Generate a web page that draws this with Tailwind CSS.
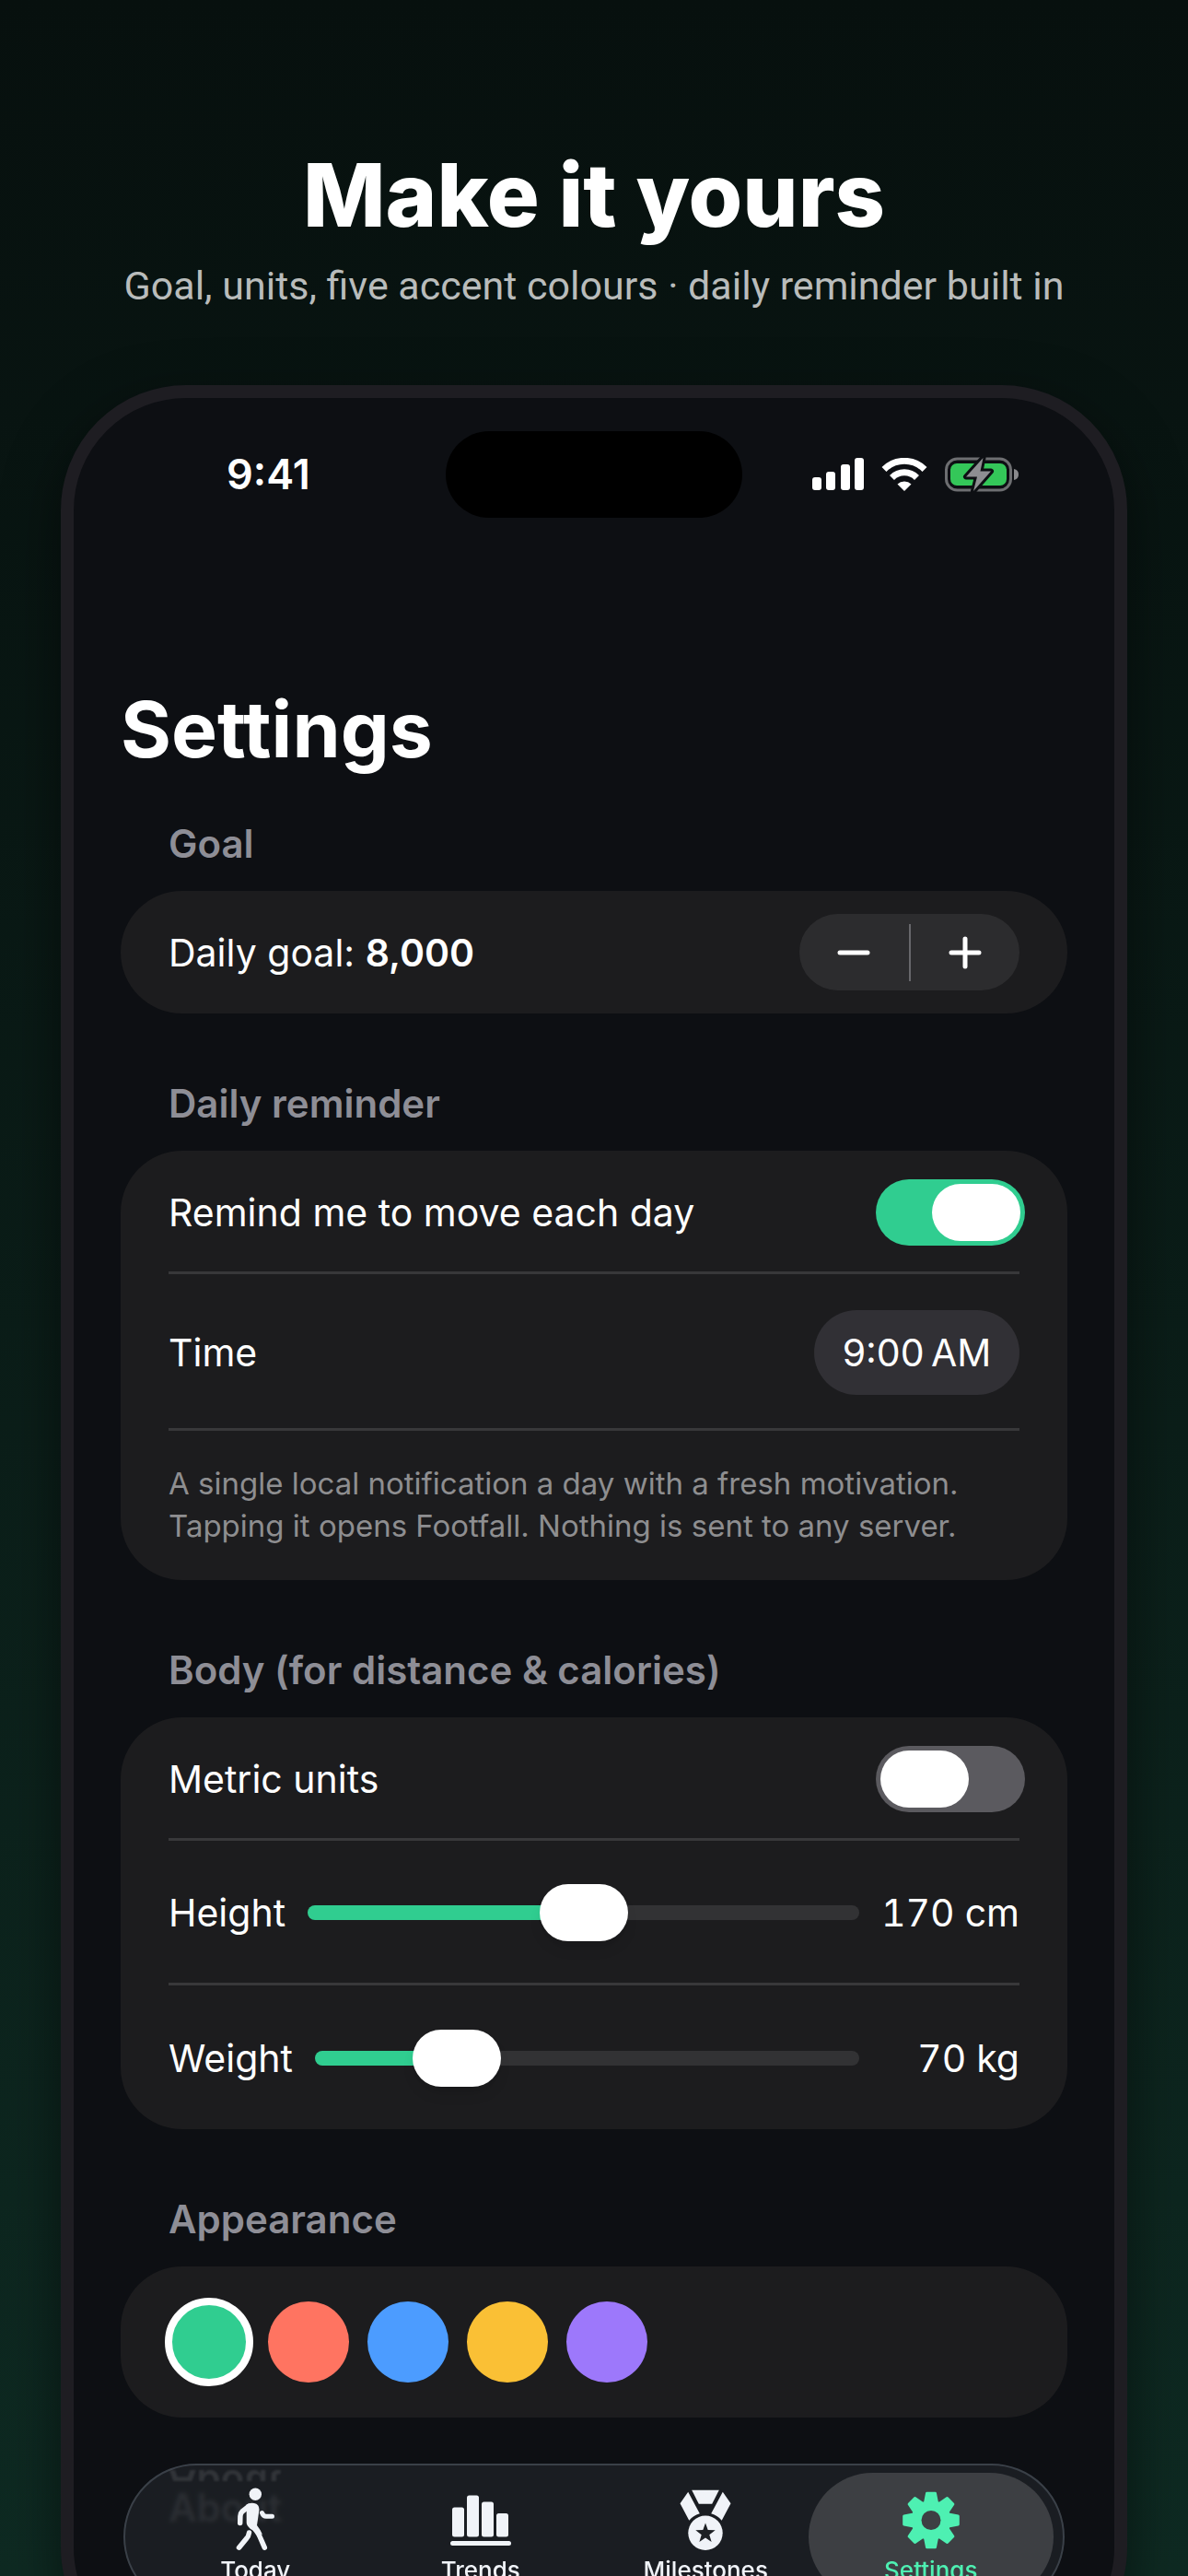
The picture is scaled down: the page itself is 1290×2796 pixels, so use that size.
<!DOCTYPE html>
<html lang="en">
  <head>
    <meta charset="UTF-8" />
    <meta name="viewport" content="width=device-width, initial-scale=1.0" />
    <title>Footfall - Make it yours</title>
    <script src="https://cdn.jsdelivr.net/npm/@tailwindcss/browser@4"></script>
  </head>

  <body class="h-screen overflow-hidden bg-linear-to-b from-[#07100e] to-[#0e2a22] font-[Inter,sans-serif] text-white antialiased">
    <!-- Headline -->
    <header class="pt-[152px] text-center">
      <h1 class="text-[95px] leading-[120px] font-extrabold">Make it yours</h1>
      <p class="mt-3 font-[Roboto,sans-serif] text-[43px] leading-[52px] text-[#b9bcbb]">Goal, units, five accent colours · daily reminder built in</p>
    </header>

    <!-- Phone -->
    <main class="relative mx-[66px] mt-[82px] h-[2483px] overflow-hidden rounded-[136px] border-14 border-[#1e1d22] bg-[#0d0f13] shadow-[0_20px_60px_rgba(0,0,0,0.5)]">
      <!-- Status bar -->
      <div class="grid grid-cols-3 items-center pt-9">
        <span class="pl-[166px] text-[45px] leading-[52px] font-semibold">9:41</span>
        <div class="mx-auto h-[94px] w-[322px] rounded-[47px] bg-black"></div>
        <div class="flex items-center justify-end gap-[19px] pr-[104px]">
          <svg class="h-9 w-14" viewBox="0 0 56 36" fill="#fff">
            <rect x="0" y="21" width="10" height="14" rx="3" />
            <rect x="15" y="15" width="10" height="20" rx="3" />
            <rect x="31" y="7" width="10" height="28" rx="3" />
            <rect x="46" y="0" width="10" height="35" rx="3" />
          </svg>
          <svg class="h-9 w-[50px]" viewBox="0 0 50 36" fill="none" stroke="#fff" stroke-width="7">
            <path d="M3 12.500A31 31 0 0 1 47 12.500" />
            <path d="M11.500 21.500A19 19 0 0 1 38.500 21.500" />
            <path d="M25 36L17.500 28.500A11 11 0 0 1 32.500 28.500Z" fill="#fff" stroke="none" />
          </svg>
          <svg class="h-10 w-20" viewBox="0 0 80 40">
            <rect x="1.500" y="3" width="70" height="34" rx="12" fill="none" stroke="#6d6e71" stroke-width="3" />
            <path d="M75 14Q80 15 80 20Q80 25 75 26Z" fill="#8a8a8d" />
            <rect x="6" y="8" width="61" height="24" rx="7" fill="#34c759" />
            <path d="M41.500 2L23 22.500H35L31 38L50 16.500H38.500Z" fill="#8e8e92" stroke="#0d0f13" stroke-width="6" paint-order="stroke" stroke-linejoin="round" />
          </svg>
        </div>
      </div>

      <div class="px-[51px] pt-[178px]">
        <h2 class="text-[84px] leading-[104px] font-bold">Settings</h2>

        <!-- Goal -->
        <section class="pt-[46px]">
          <h3 class="pb-[25px] pl-[52px] text-[42px] leading-[52px] font-semibold text-[#8e8e96]">Goal</h3>
          <div class="flex h-[133px] items-center justify-between rounded-[67px] bg-[#1c1c1e] px-[52px]">
            <p class="text-[41px] leading-[52px]">Daily goal: <span class="font-semibold">8,000</span></p>
            <div class="flex h-[83px] w-[239px] items-center rounded-[42px] bg-[#2c2c2e]">
              <button type="button" class="flex flex-1 justify-center" aria-label="Decrease goal">
                <svg class="size-9" viewBox="0 0 36 36" stroke="#fff" stroke-width="5" stroke-linecap="round"><path d="M3 18H33" /></svg>
              </button>
              <span class="h-[62px] w-[2px] bg-[#68686c]"></span>
              <button type="button" class="flex flex-1 justify-center" aria-label="Increase goal">
                <svg class="size-9" viewBox="0 0 36 36" stroke="#fff" stroke-width="5" stroke-linecap="round"><path d="M3 18H33M18 3V33" /></svg>
              </button>
            </div>
          </div>
        </section>

        <!-- Daily reminder -->
        <section class="pt-[72px]">
          <h3 class="pb-[25px] pl-[52px] text-[42px] leading-[52px] font-semibold text-[#8e8e96]">Daily reminder</h3>
          <div class="rounded-[67px] bg-[#1c1c1e] px-[52px]">
            <div class="-mr-1.5 flex h-[131px] items-center justify-between pt-0.5">
              <label for="remind" class="text-[41px] leading-[52px]">Remind me to move each day</label>
              <input id="remind" type="checkbox" role="switch" checked class="h-[72px] w-[162px] appearance-none rounded-full bg-[#5b5a5f] p-[5px] before:block before:h-[62px] before:w-24 before:rounded-full before:bg-white checked:bg-[#30cd90] checked:before:ml-auto" />
            </div>
            <div class="flex h-[173px] items-center justify-between border-y-3 border-[#38383a] pt-0.5">
              <span class="text-[41px] leading-[52px]">Time</span>
              <button type="button" class="h-[92px] w-[223px] rounded-[46px] bg-[#313035] text-[41px] leading-[52px]">9:00&#8201;AM</button>
            </div>
            <p class="pt-[34px] pb-9 text-[33px] leading-[46px] text-[#8e8e90]">A single local notification a day with a fresh motivation.<br />Tapping it opens Footfall. Nothing is sent to any server.</p>
          </div>
        </section>

        <!-- Body -->
        <section class="pt-[72px]">
          <h3 class="pb-[25px] pl-[52px] text-[42px] leading-[52px] font-semibold text-[#8e8e96]">Body (for distance &amp; calories)</h3>
          <div class="rounded-[67px] bg-[#1c1c1e] px-[52px]">
            <div class="-mr-1.5 flex h-[131px] items-center justify-between pt-0.5">
              <label for="metric" class="text-[41px] leading-[52px]">Metric units</label>
              <input id="metric" type="checkbox" role="switch" class="h-[72px] w-[162px] appearance-none rounded-full bg-[#5b5a5f] p-[5px] before:block before:h-[62px] before:w-24 before:rounded-full before:bg-white checked:bg-[#30cd90] checked:before:ml-auto" />
            </div>
            <div class="flex h-[160px] items-center border-y-3 border-[#38383a] pt-0.5">
              <label for="height" class="mr-6 text-[41px] leading-[52px]">Height</label>
              <input id="height" type="range" min="120" max="220" value="170" class="h-[62px] min-w-0 flex-1 appearance-none bg-transparent [&::-webkit-slider-runnable-track]:h-4 [&::-webkit-slider-runnable-track]:rounded-full [&::-webkit-slider-runnable-track]:bg-[linear-gradient(to_right,#30cd90_50%,#323234_50%)] [&::-webkit-slider-thumb]:-mt-[23px] [&::-webkit-slider-thumb]:h-[62px] [&::-webkit-slider-thumb]:w-24 [&::-webkit-slider-thumb]:appearance-none [&::-webkit-slider-thumb]:rounded-full [&::-webkit-slider-thumb]:bg-white [&::-webkit-slider-thumb]:shadow-lg" />
              <output for="height" class="w-[174px] text-right text-[41px] leading-[52px] tabular-nums">170 cm</output>
            </div>
            <div class="flex h-[156px] items-center pt-0.5">
              <label for="weight" class="mr-6 text-[41px] leading-[52px]">Weight</label>
              <input id="weight" type="range" min="40" max="180" value="70" class="h-[62px] min-w-0 flex-1 appearance-none bg-transparent [&::-webkit-slider-runnable-track]:h-4 [&::-webkit-slider-runnable-track]:rounded-full [&::-webkit-slider-runnable-track]:bg-[linear-gradient(to_right,#30cd90_25%,#323234_25%)] [&::-webkit-slider-thumb]:-mt-[23px] [&::-webkit-slider-thumb]:h-[62px] [&::-webkit-slider-thumb]:w-24 [&::-webkit-slider-thumb]:appearance-none [&::-webkit-slider-thumb]:rounded-full [&::-webkit-slider-thumb]:bg-white [&::-webkit-slider-thumb]:shadow-lg" />
              <output for="weight" class="w-[174px] text-right text-[41px] leading-[52px] tabular-nums">70 kg</output>
            </div>
          </div>
        </section>

        <!-- Appearance -->
        <section class="pt-[72px]">
          <h3 class="pb-[25px] pl-[52px] text-[42px] leading-[52px] font-semibold text-[#8e8e96]">Appearance</h3>
          <div class="flex h-[164px] items-center gap-5 rounded-[67px] bg-[#1c1c1e] px-[52px]">
            <button type="button" aria-label="Green" class="-mx-1 size-24 rounded-full border-8 border-white bg-[#30cd90]"></button>
            <button type="button" aria-label="Coral" class="size-[88px] rounded-full bg-[#ff7461]"></button>
            <button type="button" aria-label="Blue" class="size-[88px] rounded-full bg-[#4c9cff]"></button>
            <button type="button" aria-label="Yellow" class="size-[88px] rounded-full bg-[#fac035]"></button>
            <button type="button" aria-label="Purple" class="size-[88px] rounded-full bg-[#9d78fb]"></button>
          </div>
        </section>

        <h3 class="pt-[72px] pl-[52px] text-[42px] leading-[52px] font-semibold text-[#8e8e96]">About</h3>
      </div>

      <!-- Tab bar -->
      <nav class="absolute inset-x-[54px] bottom-[54px] grid h-[159px] grid-cols-4 rounded-[80px] border-2 border-[#3a4048] bg-[#1d2024]/88 pr-[21px] pl-[19px] backdrop-blur-[2px]">
        <!-- glass reflection of the heading underneath -->
        <div aria-hidden="true" class="absolute top-[5px] left-[47px] h-3 overflow-hidden text-[42px] leading-[52px] font-semibold text-white/10 blur-[1px]">
          <span class="-mt-[11px] block -scale-y-100">About</span>
        </div>

        <a href="#" class="relative flex flex-col items-center gap-1 pt-6 text-[26px] leading-8 font-medium text-[#f0f3f8]">
          <svg class="h-[70px] w-16" viewBox="0 0 64 70" fill="none" stroke="currentColor" stroke-width="5.500" stroke-linecap="round" stroke-linejoin="round">
            <circle cx="32.300" cy="7.300" r="6.700" fill="currentColor" stroke="none" />
            <path d="M22 19Q26 16 31 17Q36.500 18 36.500 24L34 41Q38 46 40 51L27 45Q22.500 41 22.700 38V22Z" fill="currentColor" stroke="none" />
            <path d="M25 20.500L18 26Q16 28 15.900 31L15.700 38.500" />
            <path d="M29 42Q35 48 37 53L42.300 65.200" />
            <path d="M25.500 49Q25 53 22.500 55.500L14.500 65.200" />
            <path d="M39.500 27.500Q41 31.300 44 31.300H50.500" stroke-width="5" />
          </svg>
          <span>Today</span>
        </a>
        <a href="#" class="relative flex flex-col items-center gap-1 pt-6 text-[26px] leading-8 font-medium text-[#f0f3f8]">
          <svg class="h-[70px] w-[66px]" viewBox="-1 0 66 70" fill="currentColor">
            <rect x="1" y="21.500" width="13" height="32" rx="2.500" />
            <rect x="17" y="8.500" width="13" height="45" rx="2.500" />
            <rect x="33" y="15.500" width="13" height="38" rx="2.500" />
            <rect x="49" y="28" width="13" height="25.500" rx="2.500" />
            <rect x="-1" y="58" width="66" height="5" rx="2.500" />
          </svg>
          <span>Trends</span>
        </a>
        <a href="#" class="relative flex flex-col items-center gap-1 pt-6 text-[26px] leading-8 font-medium text-[#f0f3f8]">
          <svg class="h-[70px] w-16" viewBox="0 0 64 70" fill="currentColor">
            <path d="M17.200 2.700H46.800L39.200 17.700H24.800Z" />
            <path d="M13.200 4.700L25.800 28.300Q18.500 30.500 14.300 35.700L4.500 17.300Z" />
            <path d="M50.800 4.700L38.200 28.300Q45.500 30.500 49.700 35.700L59.500 17.300Z" />
            <circle cx="32" cy="49.300" r="18.700" />
            <path d="M32 38.500L34.700 46.100L42.700 46.300L36.300 51.200L38.600 58.900L32 54.400L25.400 58.900L27.700 51.200L21.300 46.300L29.300 46.100Z" fill="#1d2024" />
          </svg>
          <span>Milestones</span>
        </a>
        <a href="#" class="relative -mx-[11px] my-2 flex flex-col items-center gap-1 rounded-[70px] bg-[#3d3f43] pt-4 text-[26px] leading-8 font-medium text-[#4ef0b2]">
          <svg class="h-[70px] w-16" viewBox="0 0 64 70" fill="currentColor" stroke="currentColor" stroke-width="3" stroke-linejoin="round">
            <g transform="translate(32 35.500)">
              <circle r="20" />
              <path d="M-6.500 -19L-4.500 -29.300H4.500L6.500 -19Z" />
              <path d="M-6.500 -19L-4.500 -29.300H4.500L6.500 -19Z" transform="rotate(45)" />
              <path d="M-6.500 -19L-4.500 -29.300H4.500L6.500 -19Z" transform="rotate(90)" />
              <path d="M-6.500 -19L-4.500 -29.300H4.500L6.500 -19Z" transform="rotate(135)" />
              <path d="M-6.500 -19L-4.500 -29.300H4.500L6.500 -19Z" transform="rotate(180)" />
              <path d="M-6.500 -19L-4.500 -29.300H4.500L6.500 -19Z" transform="rotate(225)" />
              <path d="M-6.500 -19L-4.500 -29.300H4.500L6.500 -19Z" transform="rotate(270)" />
              <path d="M-6.500 -19L-4.500 -29.300H4.500L6.500 -19Z" transform="rotate(315)" />
              <circle r="10.500" fill="#3d3f43" stroke="none" />
            </g>
          </svg>
          <span>Settings</span>
        </a>
      </nav>
    </main>
  </body>
</html>
